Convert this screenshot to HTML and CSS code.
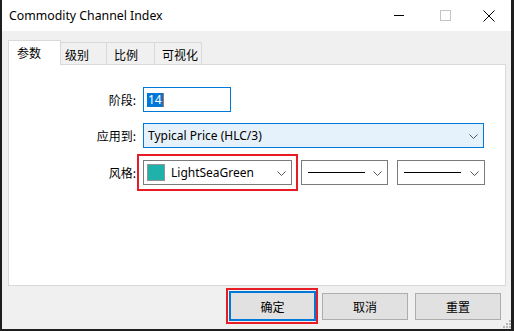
FILE: index.html
```html
<!DOCTYPE html>
<html>
<head>
<meta charset="utf-8">
<link rel="stylesheet" href="styles.css">
</head>
<body>
<div class="window">
  <div class="titlebar">
    <span class="title">Commodity Channel Index</span>
    <div class="controls">
      <span class="ctl"><svg width="11" height="11" viewBox="0 0 11 11"><line x1="0" y1="5.5" x2="10" y2="5.5" stroke="#000" stroke-width="1"/></svg></span>
      <span class="ctl"><svg width="11" height="11" viewBox="0 0 11 11"><rect x="0.5" y="0.5" width="10" height="10" fill="none" stroke="#c4c4c4" stroke-width="1"/></svg></span>
      <span class="ctl ctl-close"><svg width="12" height="12" viewBox="0 0 12 12"><path d="M0.5 0.5 L11.5 11.5 M11.5 0.5 L0.5 11.5" stroke="#000" stroke-width="1"/></svg></span>
    </div>
  </div>
  <div class="content">
    <div class="tabs">
      <div class="tab active">参数</div>
      <div class="tab">级别</div>
      <div class="tab">比例</div>
      <div class="tab">可视化</div>
    </div>
    <div class="panel">
      <div class="form">
        <div class="label">阶段:</div>
        <div class="field"><div class="input"><span class="sel">14</span></div></div>

        <div class="label row2">应用到:</div>
        <div class="field row2">
          <div class="combo combo-active">
            <span class="combo-text">Typical Price (HLC/3)</span>
            <svg class="chev" width="9" height="5" viewBox="0 0 9 5"><polyline points="0.5,0.5 4.5,4.5 8.5,0.5" fill="none" stroke="#555" stroke-width="1"/></svg>
          </div>
        </div>

        <div class="label row3">风格:</div>
        <div class="field row3 style-row">
          <div class="highlight-wrap">
            <div class="combo combo-color">
              <span class="swatch"></span>
              <span class="combo-text">LightSeaGreen</span>
              <svg class="chev" width="9" height="5" viewBox="0 0 9 5"><polyline points="0.5,0.5 4.5,4.5 8.5,0.5" fill="none" stroke="#555" stroke-width="1"/></svg>
            </div>
            <div class="redbox"></div>
          </div>
          <div class="combo combo-line">
            <span class="line"></span>
            <svg class="chev" width="9" height="5" viewBox="0 0 9 5"><polyline points="0.5,0.5 4.5,4.5 8.5,0.5" fill="none" stroke="#555" stroke-width="1"/></svg>
          </div>
          <div class="combo combo-line combo-line2">
            <span class="line"></span>
            <svg class="chev" width="9" height="5" viewBox="0 0 9 5"><polyline points="0.5,0.5 4.5,4.5 8.5,0.5" fill="none" stroke="#555" stroke-width="1"/></svg>
          </div>
        </div>
      </div>
    </div>
    <div class="buttons">
      <div class="btn-wrap">
        <div class="btn btn-default">确定</div>
        <div class="redbox redbox-btn"></div>
      </div>
      <div class="btn btn-cancel">取消</div>
      <div class="btn btn-reset">重置</div>
    </div>
  </div>
  <svg class="grip" width="8" height="8" viewBox="0 0 8 8">
    <rect x="6" y="0" width="2" height="2" fill="#b8b8b8"/>
    <rect x="3" y="3" width="2" height="2" fill="#b8b8b8"/>
    <rect x="6" y="3" width="2" height="2" fill="#b8b8b8"/>
    <rect x="0" y="6" width="2" height="2" fill="#b8b8b8"/>
    <rect x="3" y="6" width="2" height="2" fill="#b8b8b8"/>
    <rect x="6" y="6" width="2" height="2" fill="#b8b8b8"/>
  </svg>
</div>
</body>
</html>
```

FILE: styles.css
```css
* { box-sizing: border-box; }
html, body { margin: 0; padding: 0; }
body {
  background: #1e1e1e;
  width: 514px;
  height: 331px;
  overflow: hidden;
  font-family: "Noto Sans", "Noto Sans CJK SC", sans-serif;
  font-size: 12px;
  color: #000;
}
.window {
  position: relative;
  margin-left: 2px;
  width: 509px;
  height: 329px;
  background: #f0f0f0;
  display: flex;
  flex-direction: column;
}
.titlebar {
  height: 31px;
  background: #fff;
  display: flex;
  align-items: center;
  padding-left: 7px;
  flex: none;
}
.title {
  font-size: 12.3px;
  color: #000;
  line-height: 16px;
}
.controls {
  margin-left: auto;
  display: flex;
  height: 31px;
}
.ctl {
  width: 46px;
  display: flex;
  align-items: center;
  justify-content: center;
}
.ctl svg { display: block; }
.ctl-close {
  width: 43px;
  justify-content: flex-start;
  padding-left: 15px;
}
.content {
  flex: 1;
  padding: 9px 5px 0 6px;
  display: flex;
  flex-direction: column;
}
.tabs {
  display: flex;
  align-items: flex-end;
  height: 24px;
  position: relative;
  z-index: 1;
}
.tab {
  height: 22px;
  border: 1px solid #d9d9d9;
  border-bottom: none;
  background: #f0f0f0;
  margin-left: -1px;
  display: flex;
  align-items: center;
  justify-content: flex-start;
  padding-left: 7px;
  padding-top: 1px;
  font-family: "Noto Sans CJK SC", sans-serif;
}
.tab:nth-child(2) { width: 46px; margin-left: 0; border-left: none; padding-left: 4px; }
.tab:nth-child(3) { width: 49px; }
.tab:nth-child(4) { width: 48px; }
.tab.active {
  width: 53px;
  height: 25px;
  margin-left: 0;
  margin-bottom: -1px;
  background: #fff;
  padding-left: 8px;
  padding-top: 0;
  padding-bottom: 1px;
}
.panel {
  width: 498px;
  height: 222px;
  border: 1px solid #d9d9d9;
  background: #fff;
  flex: none;
  padding-top: 22px;
}
.form {
  display: grid;
  grid-template-columns: 127px auto;
  column-gap: 7px;
  align-items: center;
}
.label {
  text-align: right;
  font-family: "Noto Sans CJK SC", sans-serif;
  font-size: 12px;
  line-height: 16px;
}
.row2 { margin-top: 11px; }
.row3 { margin-top: 12px; }
.field { display: flex; }
.input {
  width: 88px;
  height: 25px;
  border: 1px solid #0078d7;
  background: #fff;
  display: flex;
  align-items: center;
  padding-left: 3px;
}
.sel {
  background: #0078d7;
  color: #fff;
  line-height: 14px;
  height: 14px;
  padding: 0 1px;
  border-right: 1px solid #c07030;
}
.combo {
  position: relative;
  height: 25px;
  border: 1px solid #7a7a7a;
  background: #fff;
  display: flex;
  align-items: center;
}
.combo .chev {
  position: absolute;
  right: 5px;
  top: 10px;
  display: block;
}
.combo-active {
  width: 341px;
  background: #e5f1fb;
  border-color: #0078d7;
  padding-left: 4px;
}
.combo-text { line-height: 16px; white-space: nowrap; }
.style-row { gap: 9px; }
.highlight-wrap { position: relative; }
.combo-color {
  width: 149px;
  padding-left: 3px;
}
.swatch {
  width: 18px;
  height: 17px;
  background: #20b2aa;
  border: 1px solid #949494;
  margin-right: 6px;
  flex: none;
}
.redbox {
  position: absolute;
  left: -6px;
  top: -6px;
  right: -6px;
  bottom: -6px;
  border: 2px solid #e81c24;
  pointer-events: none;
}
.combo-line {
  width: 87px;
  padding-left: 6px;
}
.combo-line2 { width: 88px; }
.line {
  display: block;
  width: 57px;
  height: 1px;
  background: #000;
  margin-top: -1px;
}
.buttons {
  display: flex;
  justify-content: flex-end;
  align-items: center;
  margin-top: 5px;
  padding-right: 5px;
  height: 30px;
}
.btn {
  width: 86px;
  height: 27px;
  background: #e1e1e1;
  border: 1px solid #adadad;
  display: flex;
  align-items: center;
  justify-content: center;
  font-family: "Noto Sans CJK SC", sans-serif;
  font-size: 12px;
}
.btn-wrap { position: relative; }
.btn-default {
  width: 87px;
  height: 30px;
  border: 2px solid #0078d7;
}
.redbox-btn {
  left: -3px;
  top: -3px;
  right: -2px;
  bottom: -3px;
}
.btn-cancel { margin-left: 6px; }
.btn-reset { margin-left: 7px; }
.grip {
  position: absolute;
  right: 0;
  bottom: 1px;
  display: block;
}
```
